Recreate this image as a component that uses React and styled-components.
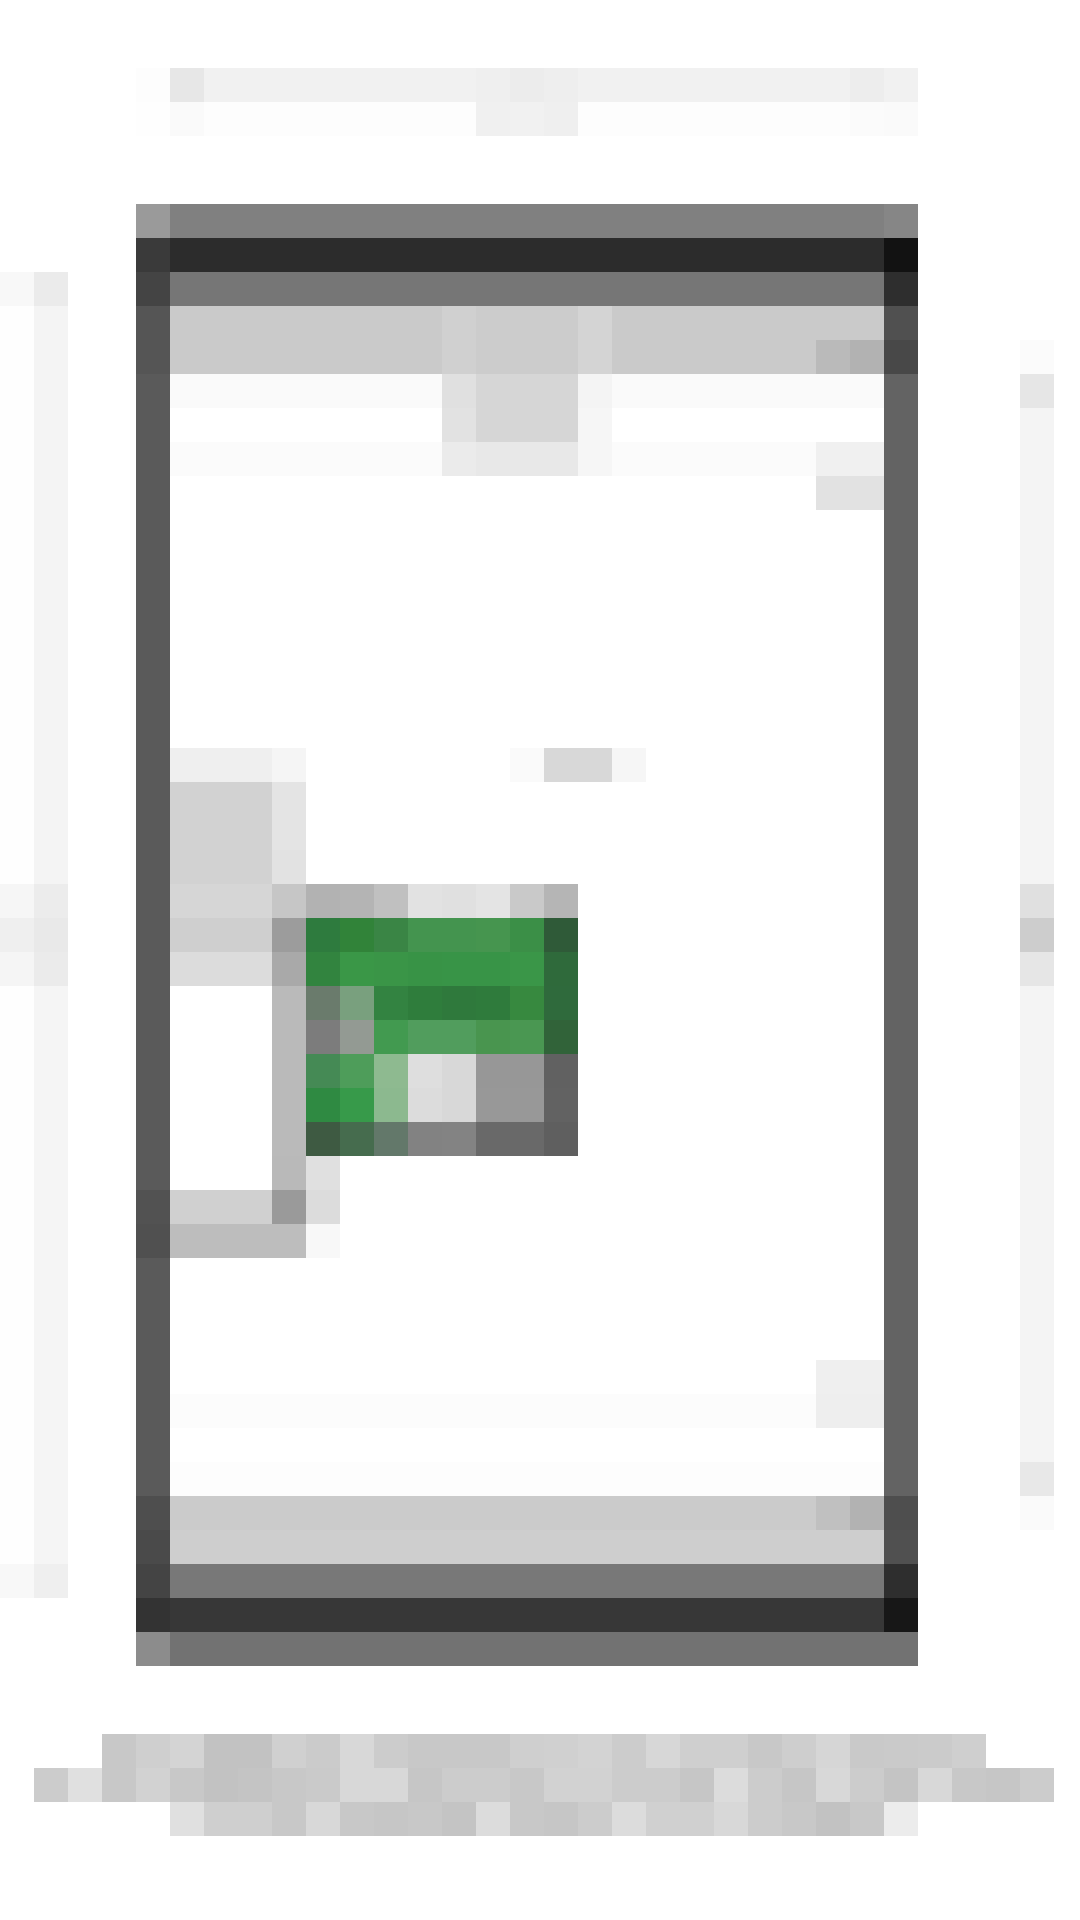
import React from 'react'
import styled, { createGlobalStyle } from 'styled-components'

const GlobalStyle = createGlobalStyle`
html, body {
    margin: 0;
    padding: 0;
    background: #fff;
}
`
const Page = styled.div`
width: 1080px;
height: 1920px;
overflow: hidden;
background: #fff;
display: flex;
flex-direction: column;
`
const Caption = styled.div`
margin: 68px 0 68px 136px;
`
const Stage = styled.div`
display: flex;
align-items: flex-start;
`
const LeftRail = styled.div`
margin-top: 68px;
`
const Phone = styled.div`
margin-left: 68px;
width: 782px;
display: flex;
flex-direction: column;
`
const RightRail = styled.div`
margin: 136px 0 0 102px;
`
const PhoneBody = styled.div`
display: flex;
`
const Bezel = styled.div`
flex: none;
width: 34px;
`
const Screen = styled.div`
width: 714px;
background: #fff;
display: flex;
flex-direction: column;
`
const AppBar = styled.div`
margin-bottom: 238px;
`
const Middle = styled.div`
margin-bottom: 102px;
`
const BottomBar = styled.div`
display: flex;
flex-direction: column;
`
const Footer = styled.div`
margin: 68px 0 0 34px;
width: 1020px;
display: flex;
flex-direction: column;
align-items: center;
`
const Row = styled.div`
display: flex;
`
const Tile = styled.div`
flex: none;
height: 34px;
width: ${p => p.$n * 34}px;
background: ${p => p.$c};
`

const g = v => `rgb(${v},${v},${v})`

// a row is a list of [colour, run length], a bare value is a run of one
const Mosaic = ({ rows }) => rows.map((row, i) => (
    <Row key={i}>
        {row.map((t, j) => {
            const [c, n] = Array.isArray(t) ? t : [t, 1]
            return <Tile key={j} $n={n} $c={typeof c === 'number' ? g(c) : c} />
        })}
    </Row>
))

const captionRows = [
    [253, 231, [241, 8], 239, 236, 238, [241, 8], 237, 241],
    [254, 250, [253, 8], 240, 241, 239, [253, 8], 251, 250],
]

const leftRailRows = [
    [248, 235],
    ...Array(17).fill([254, 244]),
    [246, 236],
    [239, 233],
    [245, 235],
    ...Array(17).fill([254, 245]),
    [248, 239],
]

const rightRailRows = [
    [251],
    [230],
    ...Array(14).fill([244]),
    [224],
    [205],
    [230],
    ...Array(14).fill([244]),
    [232],
    [250],
]

const bezelTop = [
    [154, [128, 21], 134],
    [58, [44, 20], 44, 18],
    [68, [118, 20], 118, 46],
]

const bezelBottom = [
    [68, [120, 21], 46],
    [51, [55, 21], 23],
    [140, [114, 22]].slice(0, 2),
]

const leftBezel = [
    [85],
    [85],
    ...Array(24).fill([90]),
    [82],
    [80],
    ...Array(7).fill([90]),
    [78],
    [74],
]

const rightBezel = [
    [80],
    [72],
    ...Array(33).fill([99]),
    [78],
    [80],
]

const appBarRows = [
    [[202, 8], 208, [204, 3], 212, [202, 8]],
    [[202, 8], 208, [204, 3], 212, [202, 6], 186, 178],
    [[250, 8], 224, [214, 3], 244, [250, 8]],
    [[255, 8], 226, [214, 3], 246, [255, 8]],
    [[251, 8], 235, [232, 3], 246, [251, 6], [240, 2]],
    [[255, 19], [226, 2]],
]

// rows 22 to 36 of the screen, the block with the green flag sits here
const middleRows = [
    [[239, 3], 245, [255, 6], 250, [216, 2], 246],
    [[210, 3], 228],
    [[210, 3], 228],
    [[210, 3], 226],
    [[214, 3], 198, 178, 180, 192, 226, 224, 228, 201, 181],
    [[207, 3], 156, '#2e7b3e', '#318339', '#3a8545', '#44944f', '#44944f', '#46954f', '#3b8f47', '#2f5a38'],
    [[220, 3], 169, '#32843f', '#3a9747', '#3a9547', '#389346', '#389447', '#389447', '#3a9648', '#2f6a3b'],
    [[255, 3], 186, '#6a7b6c', '#79a07e', '#338341', '#2f7d3c', '#2f793c', '#2f7b3c', '#37893f', '#2f6a3c'],
    [[255, 3], 186, 124, '#939a93', '#429a50', '#519d5d', '#519d5d', '#49954f', '#4a9752', '#316339'],
    [[255, 3], 186, '#458a55', '#4e9d5a', '#8eba90', 222, 216, 151, 151, 97],
    [[255, 3], 186, '#2f8a42', '#379a4a', '#8cb98f', 220, 216, 152, 152, 98],
    [[255, 3], 186, '#3e5a42', '#466c4e', '#63786a', 130, 131, 105, 105, 95],
    [[255, 3], 185, 224],
    [[208, 3], 154, 220],
    [[189, 4], 248],
]

const bottomRows = [
    [[255, 19], [239, 2]],
    [[252, 19], [238, 2]],
    [[255, 21]],
    [[253, 21]],
    [[203, 19], 192, 178],
    [[206, 21]],
]

const footerRows = [
    [200, 207, 212, 194, 194, 208, 203, 216, 204, 200, 200, 200, 207, 208, 211, 204, 215, 207, 207, 200, 206, 214, 201, 202, 203, 207],
    [204, 224, 200, 210, 200, 194, 196, 200, 202, 216, 216, 198, 204, 204, 200, 210, 210, 204, 204, 198, 220, 204, 198, 216, 204, 196, 216, 200, 198, 204],
    [224, 207, 207, 200, 216, 200, 198, 200, 196, 220, 200, 198, 204, 220, 208, 208, 216, 204, 200, 194, 200, 236],
]

const App = () => {
    return (
        <Page>
            <GlobalStyle />
            <Caption>
                <Mosaic rows={captionRows} />
            </Caption>
            <Stage>
                <LeftRail>
                    <Mosaic rows={leftRailRows} />
                </LeftRail>
                <Phone>
                    <Mosaic rows={bezelTop} />
                    <PhoneBody>
                        <Bezel>
                            <Mosaic rows={leftBezel} />
                        </Bezel>
                        <Screen>
                            <AppBar>
                                <Mosaic rows={appBarRows} />
                            </AppBar>
                            <Middle>
                                <Mosaic rows={middleRows} />
                            </Middle>
                            <BottomBar>
                                <Mosaic rows={bottomRows} />
                            </BottomBar>
                        </Screen>
                        <Bezel>
                            <Mosaic rows={rightBezel} />
                        </Bezel>
                    </PhoneBody>
                    <Mosaic rows={bezelBottom} />
                </Phone>
                <RightRail>
                    <Mosaic rows={rightRailRows} />
                </RightRail>
            </Stage>
            <Footer>
                <Mosaic rows={footerRows} />
            </Footer>
        </Page>
    )
}

export default App
